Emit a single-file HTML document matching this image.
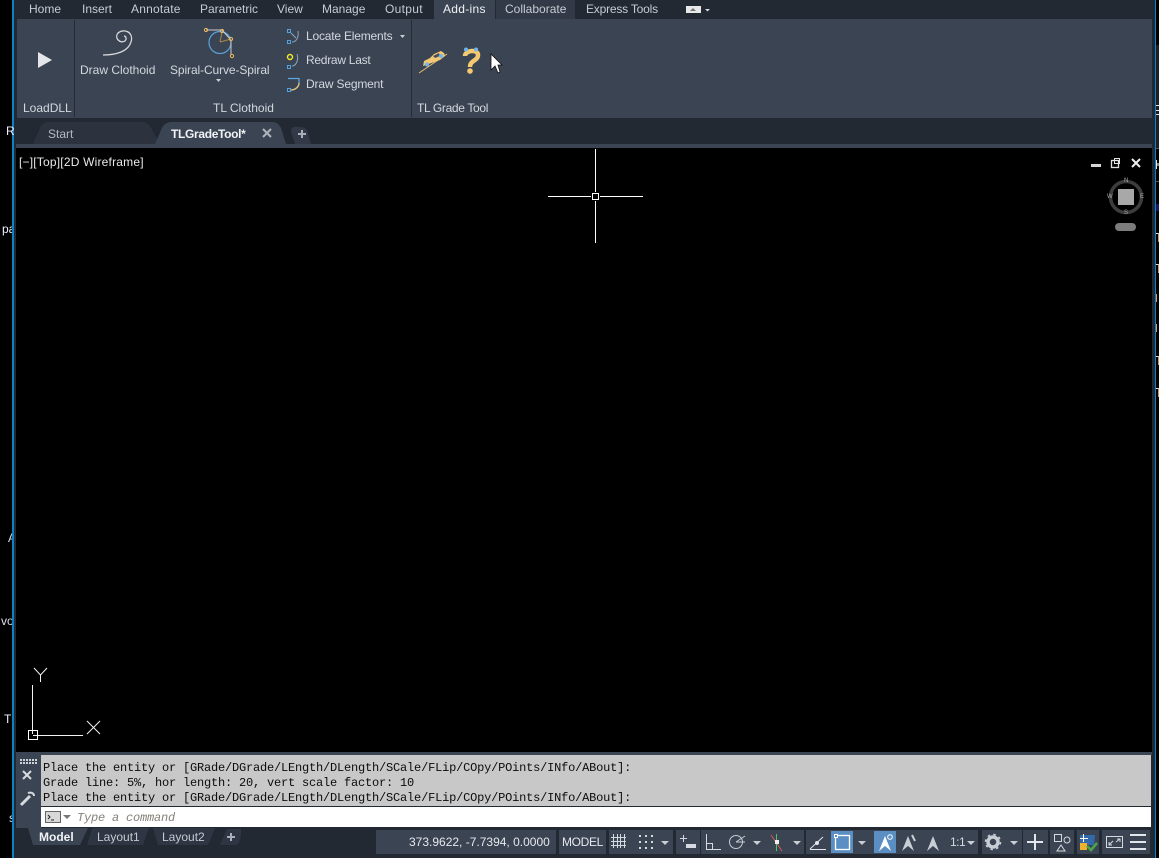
<!DOCTYPE html>
<html><head><meta charset="utf-8"><style>
html,body{margin:0;padding:0;background:#000}
body{width:1159px;height:858px;position:relative;overflow:hidden;font-family:"Liberation Sans",sans-serif}
.a{position:absolute}
.t{position:absolute;white-space:nowrap;font-size:12px;line-height:14px;color:#d3d8df}
.h{color:#c6ccd3}
.m{position:absolute;white-space:nowrap;font:12px/15px "Liberation Mono",monospace;letter-spacing:-.2px;color:#0c0c0c;left:43px}
svg{position:absolute;left:0;top:0}
</style></head><body>
<div class="a" style="left:14px;top:0;width:1141px;height:858px;background:#222933"></div>
<div class="a" style="left:12px;top:0;width:2px;height:858px;background:#0b82c8"></div>
<div class="a" style="left:1155px;top:0;width:1px;height:858px;background:#0b82c8"></div>
<div class="a" style="left:1156px;top:45px;width:3px;height:103px;background:#1d2027"></div>
<div class="a" style="left:1156px;top:105px;width:3px;height:1px;background:#dfe3e8"></div>
<div class="a" style="left:1156px;top:110px;width:3px;height:1px;background:#dfe3e8"></div>
<div class="a" style="left:1156px;top:114px;width:3px;height:1px;background:#dfe3e8"></div>
<div class="a" style="left:1156px;top:148px;width:3px;height:1px;background:#555"></div>
<div class="a" style="left:1156px;top:160px;width:1px;height:9px;background:#e8e8e8"></div>
<div class="a" style="left:1157px;top:163px;width:2px;height:3px;background:#888"></div>
<div class="a" style="left:1156px;top:181px;width:3px;height:1px;background:#555"></div>
<div class="a" style="left:1156px;top:204px;width:3px;height:7px;background:#141a66"></div>
<div class="a" style="left:1156px;top:233px;width:2px;height:8px;border-top:1px solid #dde;border-right:1px solid #c96"></div>
<div class="a" style="left:1156px;top:264px;width:2px;height:8px;border-top:1px solid #dde;border-right:1px solid #c96"></div>
<div class="a" style="left:1156px;top:294px;width:2px;height:8px;border-left:1px solid #d96"></div>
<div class="a" style="left:1156px;top:324px;width:2px;height:8px;border-left:1px solid #d96"></div>
<div class="a" style="left:1156px;top:356px;width:2px;height:8px;border-top:1px solid #dde;border-right:1px solid #c96"></div>
<div class="a" style="left:1156px;top:388px;width:2px;height:8px;border-top:1px solid #dde;border-right:1px solid #c96"></div>
<div class="a" style="left:17px;top:19px;width:1135px;height:99px;background:#3b4452"></div>
<div class="a" style="left:434px;top:0;width:61px;height:19px;background:#3b4452"></div>
<div class="a" style="left:496px;top:0;width:79px;height:19px;background:#323a47"></div>
<div class="a" style="left:74px;top:20px;width:1px;height:97px;background:#252c37"></div>
<div class="a" style="left:411px;top:20px;width:1px;height:97px;background:#252c37"></div>
<div class="a" style="left:16px;top:144px;width:1136px;height:4px;background:#3b4452"></div>
<div class="a" style="left:16px;top:148px;width:1136px;height:605px;background:#000"></div>
<div class="a" style="left:16px;top:752px;width:1136px;height:3px;background:#3b4452"></div>
<div class="a" style="left:16px;top:755px;width:25px;height:73px;background:#3b4452"></div>
<div class="a" style="left:41px;top:755px;width:1110px;height:51px;background:#c8c8c8"></div>
<div class="a" style="left:41px;top:807px;width:1110px;height:20px;background:#fff"></div>
<div class="a" style="left:376px;top:830px;width:180px;height:24px;background:#3b4452"></div>
<div class="a" style="left:559px;top:830px;width:47px;height:24px;background:#3b4452"></div>
<div class="a" style="left:609px;top:830px;width:64px;height:24px;background:#3b4452"></div>
<div class="a" style="left:676px;top:830px;width:24px;height:24px;background:#3b4452"></div>
<div class="a" style="left:701px;top:830px;width:103px;height:24px;background:#3b4452"></div>
<div class="a" style="left:806px;top:830px;width:172px;height:24px;background:#3b4452"></div>
<div class="a" style="left:982px;top:830px;width:40px;height:24px;background:#3b4452"></div>
<div class="a" style="left:1023px;top:830px;width:25px;height:24px;background:#3b4452"></div>
<div class="a" style="left:1050px;top:830px;width:24px;height:24px;background:#3b4452"></div>
<div class="a" style="left:1077px;top:830px;width:22px;height:24px;background:#3b4452"></div>
<div class="a" style="left:1102px;top:830px;width:48px;height:24px;background:#3b4452"></div>
<div class="a" style="left:831px;top:831px;width:22px;height:22px;background:#5b8fc4"></div>
<div class="a" style="left:874px;top:831px;width:22px;height:22px;background:#5b8fc4"></div>

<svg width="1159" height="858" viewBox="0 0 1159 858" fill="none">
<path d="M160 144L150 126Q147 122 142 122H50Q42 122 40 128L33 144Z" fill="#2c333f"/>
<path d="M286 144L281 128Q278 122 273 122H172Q165 122 162 128L155 144Z" fill="#3b4452"/>
<path d="M311 144L307 130Q305 127 300 127H295Q291 127 291 132L295 144Z" fill="#323a47"/>
<path d="M28 828L33 845H80L88 828Z" fill="#3b4452"/>
<path d="M92 828L87 845H143L149 828Z" fill="#2e3643"/>
<path d="M153 828L158 845H208L215 828Z" fill="#2e3643"/>
<path d="M227 829L220 845H235Q240 845 241 835V829Z" fill="#2e3643"/>
<path d="M38 52V68L52 60Z" fill="#e4e6e9"/>
<path d="M103 55C115 55 128 52 131 42C134 32 124 28 118 33C114 38 120 44 125 41C127 39 126 36 124 36" stroke="#d7d9dc" stroke-width="1.300"/>
<circle cx="220" cy="42.500" r="11" stroke="#58a4dc" stroke-width="1.200"/>
<path d="M206 30H222L231 40V55" stroke="#c8ccd0" stroke-width="1"/><path d="M220 42L222 32M220 42L231 39" stroke="#a58850"/>
<circle cx="206" cy="30" r="1.600" stroke="#f0b95a"/><circle cx="222" cy="31" r="1.600" stroke="#f0b95a"/><circle cx="231" cy="39" r="1.600" stroke="#f0b95a"/><circle cx="232" cy="56" r="1.600" stroke="#f0b95a"/>
<path d="M216 79h5l-2.500 3z" fill="#c9ced4"/>
<rect x="287.500" y="29.500" width="3" height="3" stroke="#4ea3e0"/><rect x="287.500" y="40.500" width="3" height="3" stroke="#4ea3e0"/><path d="M291 33L296 38M292 42C296 42 299 38 298 31" stroke="#8fa6bd"/>
<path d="M400 35h5l-2.500 3z" fill="#c9ced4"/>
<circle cx="290" cy="57" r="2.500" stroke="#f2ea25" stroke-width="1.400"/><rect x="287.500" y="65.500" width="3" height="3" stroke="#4ea3e0"/><path d="M292 66C296 66 299 60 297 54" stroke="#8fa6bd"/>
<path d="M288 78.500H299V84C298 88 294 90 291 90" stroke="#5ca7e0" stroke-width="1.300"/><path d="M291 90C295 90 299 87 299 83" stroke="#e6c46f" stroke-width="1.300"/><rect x="287.500" y="88.500" width="3" height="3" stroke="#4ea3e0"/>
<path d="M419 73L447 54" stroke="#e9c16d"/>
<path d="M423 66L424 61L430 58L434 54L441 51L444 53L445 56L440 60Z" fill="#f3c874"/><path d="M433 56L439 53L440 56L435 58Z" fill="#47505e"/><circle cx="427" cy="64.500" r="2" fill="#71b5ea"/><circle cx="441" cy="56" r="2" fill="#71b5ea"/>
<path d="M465 56C465 50 478 49 478 55C478 61 470 60 470 67" stroke="#f5c96f" stroke-width="4.500"/><circle cx="470" cy="71" r="2.800" fill="#f5c96f"/><circle cx="466" cy="49.500" r="2" fill="#71b5ea"/><circle cx="476" cy="49.500" r="2" fill="#71b5ea"/>
<path d="M491 54V70L495 66L498 73L500 72L498 65L502 65Z" fill="#fff" stroke="#111" stroke-width=".8"/>
<rect x="686" y="6" width="15" height="7" fill="#e8e8e8"/><path d="M690 11h6l-3-3z" fill="#777"/><path d="M705 9h5l-2.500 2.500z" fill="#d8dce0"/>
<path d="M263 129L271 137M271 129L263 137" stroke="#aeb4bc" stroke-width="2"/>
<path d="M302 130V138M298 134H306" stroke="#a9afb8" stroke-width="2"/>
<path d="M595.500 149V192M595.500 201V243M548 196.500H591M600 196.500H643" stroke="#fff"/><rect x="592.500" y="193.500" width="6" height="6" stroke="#fff"/>
<rect x="1091" y="164" width="10" height="3" fill="#d5d5d5"/>
<rect x="1111.500" y="160.500" width="7" height="7" stroke="#e0e0e0" stroke-width="1.300"/><rect x="1114.500" y="158.500" width="5" height="5" stroke="#e0e0e0"/>
<path d="M1132 159L1140 167M1140 159L1132 167" stroke="#eee" stroke-width="2"/>
<circle cx="1126" cy="197" r="15.500" stroke="#3d3d3d" stroke-width="3.500"/>
<rect x="1118" y="189" width="16" height="16" fill="#a8a8a8"/>
<rect x="1115" y="223" width="21" height="8" rx="4" fill="#7c7c7c"/>
<path d="M32.500 734V685M33 735.500H83M87 721L100 734M100 721L87 734M34 668L40.500 675L47 668M40.500 675V682" stroke="#f2f2f2"/>
<rect x="28.500" y="730.500" width="9" height="9" stroke="#fff"/>
<path d="M20 759h2v2h-2zM23 759h2v2h-2zM26 759h2v2h-2zM29 759h2v2h-2zM32 759h2v2h-2zM35 759h2v2h-2zM20 762h2v2h-2zM23 762h2v2h-2zM26 762h2v2h-2zM29 762h2v2h-2zM32 762h2v2h-2zM35 762h2v2h-2z" fill="#cfd3d8"/>
<path d="M23 771L31 779M31 771L23 779" stroke="#d7dade" stroke-width="2"/>
<path d="M21 805L30 796" stroke="#d7dade" stroke-width="3"/><path d="M28 793C31 792 34 793 34 796" stroke="#d7dade" stroke-width="2"/>
<rect x="45.500" y="811.500" width="15" height="11" fill="#d8d8d8" stroke="#666"/><path d="M48 815L50 817L48 819M51 820h3" stroke="#222"/><path d="M63 815h8l-4 4z" fill="#777"/>
<path d="M231 833V841M227 837H235" stroke="#a9afb8" stroke-width="2"/>
<path d="M613.500 834V848M617.500 834V848M620.500 834V848M624.500 834V848M611 837.500H626M611 841.500H626M611 845.500H626" stroke="#d5dae0"/>
<path d="M639 835h2v2h-2zM645 835h2v2h-2zM651 835h2v2h-2zM639 841h2v2h-2zM645 841h2v2h-2zM651 841h2v2h-2zM639 847h2v2h-2zM645 847h2v2h-2zM651 847h2v2h-2z" fill="#d5dae0"/>
<path d="M661 841h8l-4 4zM753 841h8l-4 4zM793 841h8l-4 4zM858 841h8l-4 4zM967 841h8l-4 4zM1010 841h8l-4 4z" fill="#c9ced4"/>
<path d="M680 838.500H687M683.500 835V842" stroke="#d5dae0"/><rect x="686" y="844" width="10" height="4" fill="#d5dae0"/>
<path d="M706.500 834V849.500H721M706 843.500H712.500V849" stroke="#d5dae0"/>
<circle cx="736" cy="842" r="6.500" stroke="#c6ccd3"/><path d="M736 842L745 836M736 842H745" stroke="#c6ccd3"/>
<path d="M771 835L782 851" stroke="#d75a5a"/><path d="M776.500 834V851" stroke="#4fc26a"/><rect x="775" y="840" width="4" height="4" fill="#eee"/>
<path d="M810 849.500H826M810 849L823 837" stroke="#e3e6ea"/><circle cx="817" cy="843" r="2" fill="#e3e6ea"/>
<rect x="835.500" y="835.500" width="14" height="14" stroke="#fff" stroke-width="1.300"/><rect x="834.500" y="834.500" width="3" height="3" fill="#5b8fc4" stroke="#fff"/>
<path d="M879 851L885 836L891 851L885 846Z" fill="#fff"/><circle cx="890" cy="837" r="2.300" stroke="#fff"/>
<path d="M902 851L908 836L914 851L908 846Z" fill="#c9ced4"/><path d="M912 835L915 841" stroke="#c9ced4" stroke-width="2"/>
<path d="M927 851L933 836L939 851L933 846Z" fill="#c9ced4"/>
<circle cx="993" cy="842" r="5" stroke="#c9ced4" stroke-width="3.500"/><circle cx="993" cy="842" r="7.500" stroke="#c9ced4" stroke-width="1.500" stroke-dasharray="2.500 3.400"/>
<path d="M1027 842H1043M1035 834V850" stroke="#e3e6ea" stroke-width="2"/>
<rect x="1054.500" y="834.500" width="7" height="7" stroke="#d5dae0"/><circle cx="1067" cy="840" r="3" stroke="#d5dae0"/><path d="M1061 845L1065 851H1057Z" stroke="#d5dae0"/>
<path d="M1080 835H1095L1094 845H1080Z" fill="#3269a8"/><rect x="1080" y="843" width="7" height="7" fill="#f0b030"/><path d="M1083.500 834V842M1080 838.500H1088" stroke="#fff"/><path d="M1087 846L1091 850L1097 843" stroke="#4aa64a" stroke-width="2.500"/>
<rect x="1106.500" y="836.500" width="16" height="11" stroke="#d5dae0"/><path d="M1109 845L1113 841M1109 842V845H1112M1120 839L1116 842M1117 839H1120V842" stroke="#d5dae0"/>
<path d="M1130 835H1146M1130 842H1146M1130 849H1146" stroke="#e3e6ea" stroke-width="2"/>
</svg>

<div class="t h" style="left:29px;top:2px">Home</div>
<div class="t h" style="left:82px;top:2px">Insert</div>
<div class="t h" style="left:131px;top:2px;letter-spacing:.2px">Annotate</div>
<div class="t h" style="left:200px;top:2px">Parametric</div>
<div class="t h" style="left:277px;top:2px">View</div>
<div class="t h" style="left:322px;top:2px">Manage</div>
<div class="t h" style="left:385px;top:2px;letter-spacing:.3px">Output</div>
<div class="t" style="left:443px;top:2px;color:#f0f2f5;letter-spacing:.3px">Add-ins</div>
<div class="t h" style="left:505px;top:2px">Collaborate</div>
<div class="t h" style="left:586px;top:2px;letter-spacing:-.2px">Express Tools</div>
<div class="t" style="left:80px;top:63px">Draw Clothoid</div>
<div class="t" style="left:170px;top:63px;letter-spacing:-.1px">Spiral-Curve-Spiral</div>
<div class="t" style="left:306px;top:29px;letter-spacing:-.2px">Locate Elements</div>
<div class="t" style="left:306px;top:53px;letter-spacing:-.27px">Redraw Last</div>
<div class="t" style="left:306px;top:77px;letter-spacing:-.17px">Draw Segment</div>
<div class="t" style="left:23px;top:101px">LoadDLL</div>
<div class="t" style="left:213px;top:101px">TL Clothoid</div>
<div class="t" style="left:417px;top:101px;letter-spacing:-.33px">TL Grade Tool</div>
<div class="t" style="left:48px;top:127px;color:#b4bac2">Start</div>
<div class="t" style="left:171px;top:127px;color:#f0f2f5;font-weight:bold;letter-spacing:-.33px">TLGradeTool*</div>
<div class="t" style="left:19px;top:155px;color:#e8e8e8;letter-spacing:.2px">[−][Top][2D Wireframe]</div>
<div class="t" style="left:1124px;top:178px;font-size:6px;line-height:6px;color:#aaa">N</div>
<div class="t" style="left:1107px;top:194px;font-size:6px;line-height:6px;color:#aaa">W</div>
<div class="t" style="left:1140px;top:194px;font-size:6px;line-height:6px;color:#aaa">E</div>
<div class="t" style="left:1124px;top:210px;font-size:6px;line-height:6px;color:#aaa">S</div>
<div class="m" style="top:761px">Place the entity or [GRade/DGrade/LEngth/DLength/SCale/FLip/COpy/POints/INfo/ABout]:</div>
<div class="m" style="top:776px">Grade line: 5%, hor length: 20, vert scale factor: 10</div>
<div class="m" style="top:791px">Place the entity or [GRade/DGrade/LEngth/DLength/SCale/FLip/COpy/POints/INfo/ABout]:</div>
<div class="m" style="left:77px;top:811px;color:#85807a;font-style:italic">Type a command</div>
<div class="t" style="left:39px;top:830px;color:#f0f2f5;font-weight:bold">Model</div>
<div class="t" style="left:97px;top:830px;color:#c4c9d0">Layout1</div>
<div class="t" style="left:162px;top:830px;color:#c4c9d0">Layout2</div>
<div class="t" style="left:409px;top:835px;color:#e6e9ed">373.9622, -7.7394, 0.0000</div>
<div class="t" style="left:562px;top:835px;color:#e6e9ed;letter-spacing:-.35px">MODEL</div>
<div class="t" style="left:950px;top:835px;color:#d5dae0;letter-spacing:-.5px">1:1</div>
<div class="t" style="left:6px;top:124px;color:#eef;">R</div>
<div class="t" style="left:2px;top:222px;color:#eef;width:10px;overflow:hidden">pa</div>
<div class="t" style="left:8px;top:531px;color:#dde;width:4px;overflow:hidden">A</div>
<div class="t" style="left:1px;top:614px;color:#dde;width:11px;overflow:hidden">vo</div>
<div class="t" style="left:4px;top:712px;color:#eef;width:8px;overflow:hidden">Tl</div>
<div class="t" style="left:9px;top:811px;color:#dde;width:3px;overflow:hidden">s</div>
</body></html>
